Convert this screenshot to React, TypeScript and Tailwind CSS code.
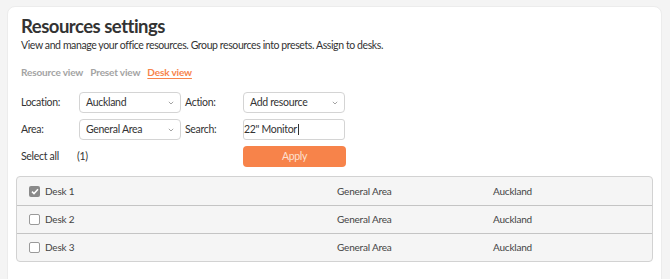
import React from "react";

function Chevron() {
  return (
    <svg width="6" height="4" viewBox="0 0 6 4" className="absolute right-[6px] top-[8px]">
      <path d="M0.8 0.8 L3 3 L5.2 0.8" fill="none" stroke="#9a9a9a" strokeWidth="0.9" />
    </svg>
  );
}

function Select({ value }: { value: string }) {
  return (
    <div className="relative h-[21px] w-[102px] rounded-[4px] border border-[#d4d4d4] bg-white pl-[6px] text-[10.5px] leading-[19px] tracking-[-0.3px] text-[#333]">
      {value}
      <Chevron />
    </div>
  );
}

function Check({ checked }: { checked: boolean }) {
  if (checked) {
    return (
      <div className="flex h-[11px] w-[11px] items-center justify-center rounded-[2px] bg-[#8a8a8a]">
        <svg width="8" height="7" viewBox="0 0 8 7">
          <path d="M1 3.6 L3 5.6 L7 1.2" fill="none" stroke="#fff" strokeWidth="1.5" />
        </svg>
      </div>
    );
  }
  return <div className="h-[11px] w-[11px] rounded-[2px] border border-[#9a9a9a] bg-white" />;
}

const rows = [
  { name: "Desk 1", checked: true },
  { name: "Desk 2", checked: false },
  { name: "Desk 3", checked: false },
];

export default function App() {
  return (
    <div className="h-[279px] overflow-hidden bg-[#f4f4f4] pl-[7px] pt-[6px] pr-[8px] font-['Lato',sans-serif] text-[#3a3a3a]">
      <div className="h-[300px] rounded-[8px] border border-[#ececec] bg-white px-[8px] pt-[8px]">
        <div className="pl-[5px]">
          <h1 className="text-[18.5px] font-bold leading-[22px] tracking-[-0.5px] text-[#333]">Resources settings</h1>
          <p className="mt-[2px] text-[10.5px] leading-[13px] tracking-[-0.4px] text-[#333]">
            View and manage your office resources. Group resources into presets. Assign to desks.
          </p>
          <div className="mt-[13px] flex gap-[7px] text-[10px] font-bold leading-[14px] tracking-[-0.15px]">
            <span className="text-[#a3a3a3]">Resource view</span>
            <span className="text-[#a3a3a3]">Preset view</span>
            <span className="text-[#f7844b] underline underline-offset-2">Desk view</span>
          </div>
          <div className="mt-[13px] grid grid-cols-[58px_102px_4px_58px_102px] gap-y-[6px] text-[10.5px] tracking-[-0.3px] text-[#333]">
            <div className="leading-[21px]">Location:</div>
            <Select value="Auckland" />
            <div />
            <div className="leading-[21px]">Action:</div>
            <Select value="Add resource" />

            <div className="leading-[21px]">Area:</div>
            <Select value="General Area" />
            <div />
            <div className="leading-[21px]">Search:</div>
            <div className="h-[21px] w-[102px] rounded-[3px] border border-[#d4d4d4] bg-white pl-0 text-[10.5px] leading-[19px] tracking-[-0.3px] text-[#333]">
              22" Monitor<span className="ml-[1px] inline-block h-[11px] w-[1px] translate-y-[2px] bg-[#333]" />
            </div>

            <div className="leading-[21px]">Select all</div>
            <div className="-ml-[2px] leading-[21px]">(1)</div>
            <div />
            <div />
            <div className="flex h-[21px] w-[103px] items-center justify-center rounded-[4px] bg-[#f7834a] text-[10.5px] text-[#fde0d0]">
              Apply
            </div>
          </div>
        </div>
        <div className="mt-[9px] overflow-hidden rounded-[4px] border border-[#d2d2d2] bg-[#f5f5f5] text-[10px] tracking-[-0.2px] text-[#444]">
          {rows.map((r, i) => (
            <div
              key={r.name}
              className={`flex h-[28px] items-center ${i > 0 ? "border-t border-[#c4c4c4]" : ""}`}
            >
              <div className="ml-[12px] mr-[5px]">
                <Check checked={r.checked} />
              </div>
              <div className="w-[292px]">{r.name}</div>
              <div className="w-[156px]">General Area</div>
              <div>Auckland</div>
            </div>
          ))}
        </div>
      </div>
    </div>
  );
}
